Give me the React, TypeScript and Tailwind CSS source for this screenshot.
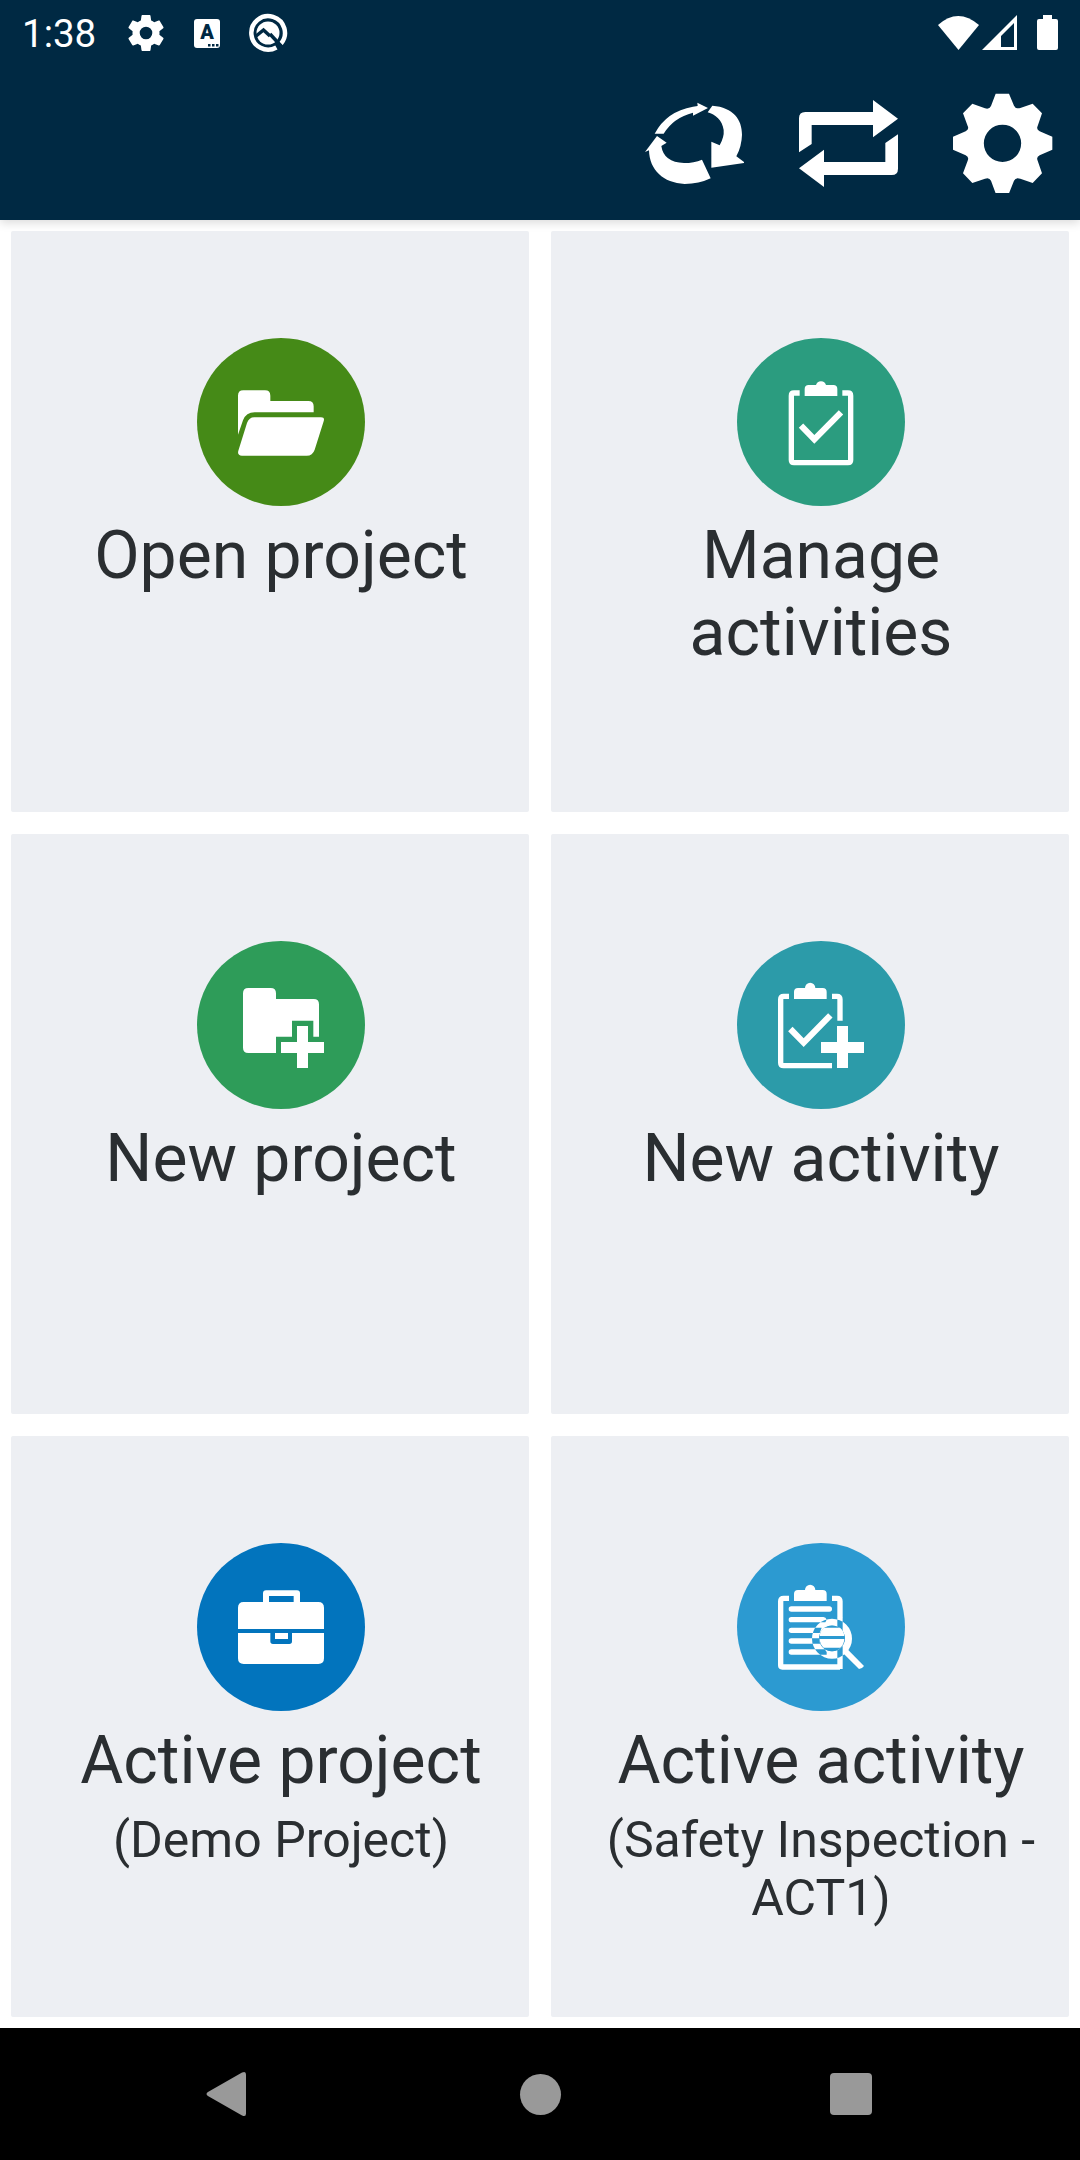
import type { ReactNode } from "react";

function ClipboardFrame() {
  return (
    <>
      <path d="M239 219H222Q214 219 214 227V420Q214 428 222 428H384Q392 428 392 420V227Q392 219 384 219H367" fill="none" stroke="#fff" strokeWidth="16" />
      <path d="M254 228V207Q254 195 266 195H288A15.500 15.500 0 0 1 318 195H340Q352 195 352 207V228Z" />
    </>
  );
}

function ClipboardClip() {
  return <path d="M222 222V201Q222 189 234 189H255A15.500 15.500 0 0 1 286 189H308Q320 189 320 201V222Z" />;
}

function OpenFolder() {
  return (
    <>
      <path d="M174 344V227Q174 211 190 211H255Q271 211 271 227V243H385Q401 243 401 259V277H224Q198 277 189 301Z" />
      <path d="M223 292H423Q435 292 431 304L404 389Q398 407 380 407H186Q171 407 175 392L201 309Q207 292 223 292Z" />
    </>
  );
}

function Check() {
  return (
    <>
      <ClipboardFrame />
      <path d="M243 317L283 358L363 277" fill="none" stroke="#fff" strokeWidth="18.500" />
    </>
  );
}

function NewFolder() {
  return (
    <>
      <path d="M205 189H272Q288 189 288 205V222H401Q417 222 417 238V335H400V287H336V335H288V384H205Q189 384 189 368V205Q189 189 205 189Z" />
      <path d="M351 303H384V351H432V384H384V429H351V384H303V351H351Z" />
    </>
  );
}

function NewActivity() {
  return (
    <>
      <path d="M207 214H191Q182 214 182 223V413Q182 422 191 422H336M336 214H351Q360 214 360 223V287" fill="none" stroke="#fff" strokeWidth="16" />
      <ClipboardClip />
      <path d="M211 312L251 353L331 271" fill="none" stroke="#fff" strokeWidth="18.500" />
      <path d="M351 303H384V351H432V384H384V429H351V384H303V351H351Z" />
    </>
  );
}

function Briefcase() {
  return (
    <>
      <path d="M249 216V190Q249 181 258 181H351Q360 181 360 190V216H415Q432 216 432 233V297H174V233Q174 216 191 216ZM267 198V216H341V198Z" fillRule="evenodd" />
      <path d="M174 309H271V334Q271 342 279 342H328Q336 342 336 334V309H432V385Q432 402 415 402H191Q174 402 174 385Z" />
      <path d="M285 309H324V327H285Z" />
    </>
  );
}

function InspectActivity() {
  return (
    <>
      <path d="M207 205H191Q182 205 182 214V406Q182 411 187 411H360M336 205H351Q360 205 360 214V262" fill="none" stroke="#fff" strokeWidth="16" />
      <g transform="translate(0 -9)">
        <ClipboardClip />
      </g>
      <path d="M214 237H328" stroke="#fff" strokeWidth="16" strokeLinecap="round" />
      {/* Page lines and page edge invert where the lens ring crosses them. */}
      <path
        fillRule="evenodd"
        d="M214 261H310Q318 261 320 269L316 277H214A8 8 0 0 1 214 261ZM214 293H305L299 309H214A8 8 0 0 1 214 293ZM214 325H299L303 341H214A8 8 0 0 1 214 325ZM214 358H314L320 366V374H214A8 8 0 0 1 214 358ZM352 261H368V417H352ZM336 266A60 60 0 1 0 336 386A60 60 0 1 0 336 266ZM336 287A38.500 38.500 0 1 1 336 364A38.500 38.500 0 1 1 336 287Z"
      />
      <path d="M384 359L432 408Q426 417 417 417L368 368Z" />
      <circle cx="336" cy="325" r="38.500" fill="#2c9ad1" />
      <path d="M299 318A37 37 0 0 1 312 293H360A37 37 0 0 1 373 318ZM299 327H373A37 37 0 0 1 361 353H311A37 37 0 0 1 299 327Z" />
    </>
  );
}

type TileProps = {
  title: string;
  detail?: string;
  color: string;
  viewBox: string;
  icon: ReactNode;
};

function Tile({ title, detail, color, viewBox, icon }: TileProps) {
  return (
    <button className="m-[11px] flex flex-col items-center rounded-[2px] bg-[#edeff3] pt-[107px] pl-[22px] text-[#2a2e31]">
      <span className={`size-[168px] shrink-0 rounded-full ${color}`}>
        <svg viewBox={viewBox} className="size-full" fill="#fff">{icon}</svg>
      </span>
      <span className="mt-[11px] w-[440px] text-center text-[66px] leading-[77px]">{title}</span>
      {detail && <span className="w-[460px] pt-[12px] text-center text-[50px] leading-[58px]">{detail}</span>}
    </button>
  );
}

function StatusBar() {
  return (
    <div className="flex h-[66px] items-center justify-between pr-[22px] pl-[22px] text-white">
      <div className="flex h-full items-center">
        <span className="w-[106px] pt-[3px] text-[38.5px] leading-none">1:38</span>
        <svg className="h-[36px] w-[36px]" viewBox="2 2 20 20" fill="currentColor">
          <path d="M19.430 12.980c.04-.32.07-.64.07-.98s-.03-.66-.07-.98l2.110-1.650c.19-.15.24-.42.12-.64l-2-3.460c-.12-.22-.39-.3-.61-.22l-2.490 1c-.52-.4-1.080-.73-1.690-.98l-.38-2.650A.488.488 0 0 0 14 2h-4c-.25 0-.46.18-.49.42l-.38 2.650c-.61.25-1.170.59-1.690.98l-2.490-1c-.23-.09-.49 0-.61.22l-2 3.460c-.13.22-.07.49.12.64l2.110 1.650c-.04.32-.07.65-.07.98s.03.66.07.98l-2.110 1.650c-.19.15-.24.42-.12.64l2 3.460c.12.22.39.3.61.22l2.490-1c.52.4 1.080.73 1.690.98l.38 2.650c.03.24.24.42.49.42h4c.25 0 .46-.18.49-.42l.38-2.650c.61-.25 1.170-.59 1.690-.98l2.490 1c.23.09.49 0 .61-.22l2-3.460c.12-.22.07-.49-.12-.64l-2.110-1.650zM12 15.500A3.500 3.500 0 1 1 12 8.500a3.500 3.500 0 0 1 0 7z" />
        </svg>
        <span className="relative ml-[30px] flex h-[29px] w-[26px] items-center justify-center rounded-[3px] bg-white pb-[2px] text-[20px] font-black text-[#002943]">
          A
          <svg className="absolute right-[1px] bottom-0 h-[4px] w-[12px]" viewBox="0 0 12 4" fill="currentColor">
            <path d="M1 0h2.500v2.500H1zM5 0h2.500v2.500H5zM9 0h2.500v2.500H9z" />
          </svg>
        </span>
        <svg className="ml-[28px] size-[40px]" viewBox="0 0 40 40">
          <path d="M28.400 34.500A16.800 16.800 0 1 1 32.900 30.800" fill="none" stroke="#fff" strokeWidth="4.500" />
          <circle cx="20" cy="20" r="11.500" fill="#fff" />
          <path d="M7.500 23.500L15.500 17L22 23M22 21L34 34" fill="none" stroke="#002943" strokeWidth="3.500" />
        </svg>
      </div>
      <div className="flex h-full items-center">
        <svg className="h-[36px] w-[79px]" viewBox="0 0 79 36" fill="currentColor">
          <path d="M0 10Q20-8 41 10L20.500 35Z" />
          <path d="M79 0V35H44ZM76 8L63 21V32H76Z" fillRule="evenodd" />
        </svg>
        <svg className="ml-[20px] h-[36px] w-[21px]" viewBox="0 0 21 36" fill="currentColor">
          <path d="M6 0H15V4H19Q21 4 21 6V33Q21 35 19 35H2Q0 35 0 33V6Q0 4 2 4H6Z" />
        </svg>
      </div>
    </div>
  );
}

function Toolbar() {
  return (
    <div className="flex h-[154px] items-start justify-end gap-[54px] pt-[27px] pr-[27px]">
      <svg className="h-[100px] w-[100px]" viewBox="75 39 300 300" fill="#fff">
        <path d="M104 161Q139 94 219 80L233 78L232 68L264 84L219 107V98Q160 113 131 161Z" />
        <path d="M263 97L277 77C341 82 366 119 366 164Q365 199 349 229L372 246V249L274 263V185L299 196Q313 171 311 150C307 120 286 104 263 97Z" />
        <path d="M75 216L111 168L140 188L124 198Q131 247 192 249Q222 249 246 239L272 295Q237 312 194 312C130 309 88 270 87 211Z" />
      </svg>
      <svg className="h-[100px] w-[100px]" viewBox="537 39 300 300" fill="#fff">
        <path d="M537 217V115Q537 96 556 96H759V60L834 116L759 172V135H575V192Z" />
        <path d="M834 163V266Q834 285 815 285H612V321L537 265L612 209V246H796V189Z" />
      </svg>
      <svg className="h-[100px] w-[100px]" viewBox="999 39 300 300" fill="#fff" fillRule="evenodd">
        <path d="M1127 41H1167L1182 77Q1187 88 1201 84L1238 71L1266 100L1253 138Q1248 149 1259 154L1297 170V209L1259 226Q1248 231 1253 242L1266 280L1238 309L1201 296Q1187 291 1182 302L1167 340H1127L1113 302Q1108 291 1095 296L1057 309L1029 280L1043 242Q1048 231 1037 226L999 209V170L1037 154Q1048 149 1043 138L1029 100L1057 71L1095 85Q1108 89 1113 78ZM1147.500 134A56 56 0 1 0 1147.500 246A56 56 0 1 0 1147.500 134Z" />
      </svg>
    </div>
  );
}

export default function App() {
  return (
    <div className="flex h-[2160px] w-[1080px] flex-col overflow-hidden bg-white font-['Roboto',sans-serif]">
      <header className="h-[220px] shrink-0 bg-[#002943] shadow-[0_3px_9px_rgba(0,0,0,0.14)]">
        <StatusBar />
        <Toolbar />
      </header>
      <main className="grid min-h-0 flex-1 grid-cols-2 grid-rows-3">
        <Tile title="Open project" color="bg-[#458a17]" viewBox="51 54 504 504" icon={<OpenFolder />} />
        <Tile title="Manage activities" color="bg-[#2b9c7f]" viewBox="51 54 504 504" icon={<Check />} />
        <Tile title="New project" color="bg-[#2e9c59]" viewBox="51 48 504 504" icon={<NewFolder />} />
        <Tile title="New activity" color="bg-[#2c9ba9]" viewBox="51 48 504 504" icon={<NewActivity />} />
        <Tile title="Active project" detail="(Demo Project)" color="bg-[#0274bd]" viewBox="51 39 504 504" icon={<Briefcase />} />
        <Tile title="Active activity" detail="(Safety Inspection - ACT1)" color="bg-[#2c9ad1]" viewBox="51 39 504 504" icon={<InspectActivity />} />
      </main>
      <nav className="flex h-[132px] shrink-0 items-center bg-black px-[206px]">
        <svg className="h-[46px] w-[40px]" viewBox="0 0 41 46" fill="#999">
          <path d="M37 1Q41-1 41 3V43Q41 47 37 45L2 25Q-1 23 2 21Z" />
        </svg>
        <span className="ml-[274px] size-[41px] rounded-full bg-[#999]" />
        <span className="ml-[269px] size-[42px] rounded-[4px] bg-[#999]" />
      </nav>
    </div>
  );
}
